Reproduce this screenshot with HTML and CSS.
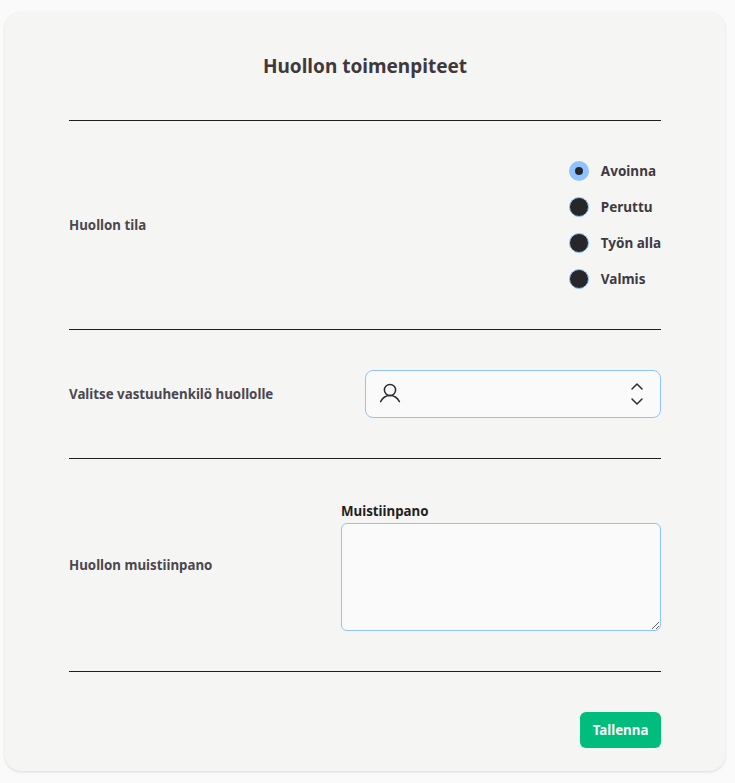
FILE: index.html
```html
<!DOCTYPE html>
<html lang="fi">
<head>
    <meta charset="UTF-8">
    <meta name="viewport" content="width=device-width, initial-scale=1.0">
    <title>Huollon toimenpiteet</title>
    <link rel="stylesheet" href="styles.css">
</head>
<body>
    <form class="card" action="#">
        <h1>Huollon toimenpiteet</h1>

        <div class="row">
            <span class="row-label">Huollon tila</span>
            <div class="radios">
                <label class="radio-item"><span class="radio checked"></span>Avoinna</label>
                <label class="radio-item"><span class="radio"></span>Peruttu</label>
                <label class="radio-item"><span class="radio"></span>Työn alla</label>
                <label class="radio-item"><span class="radio"></span>Valmis</label>
            </div>
        </div>

        <div class="row">
            <span class="row-label">Valitse vastuuhenkilö huollolle</span>
            <div class="select">
                <svg class="user-icon" width="24" height="24" viewBox="0 0 24 24" fill="none" stroke="#2b2b30" stroke-width="1.5" stroke-linecap="round">
                    <circle cx="12" cy="8" r="5.6"/>
                    <path d="M2.600 19.600c2-3.600 5.400-6 9.400-6s7.400 2.400 9.400 6"/>
                </svg>
                <svg class="updown-icon" width="14" height="24" viewBox="0 0 14 24" fill="none" stroke="#2b2b30" stroke-width="1.5" stroke-linecap="round" stroke-linejoin="round">
                    <path d="M2 7l5-5 5 5"/>
                    <path d="M2 17l5 5 5-5"/>
                </svg>
            </div>
        </div>

        <div class="row">
            <span class="row-label">Huollon muistiinpano</span>
            <div class="note">
                <label class="note-label" for="note">Muistiinpano</label>
                <textarea id="note" name="note"></textarea>
            </div>
        </div>

        <div class="actions">
            <button type="submit" class="save">Tallenna</button>
        </div>
    </form>
</body>
</html>
```

FILE: styles.css
```css
*{
    margin: 0;
    padding: 0;
    box-sizing: border-box;
    font-family: "Noto Sans", "Open Sans", sans-serif;
}
body{
    background-color: #fafafa;
    padding: 12px 10px 12px 5px;
}
.card{
    background-color: #f5f5f3;
    border-radius: 16px;
    box-shadow: 0 1px 3px rgba(0, 0, 0, 0.12);
    padding: 40px 64px 23px;
    height: 759px;
}
h1{
    text-align: center;
    font-size: 19px;
    line-height: 28px;
    font-weight: 700;
    color: #3f383c;
    padding-bottom: 40px;
    border-bottom: 1px solid #1f1f1f;
}
.row{
    display: flex;
    justify-content: space-between;
    align-items: center;
    padding: 40px 0;
    border-bottom: 1px solid #1f1f1f;
}
.row-label{
    font-size: 13.3px;
    line-height: 18px;
    font-weight: 700;
    color: #4b4750;
}
.radios{
    display: flex;
    flex-direction: column;
    gap: 16px;
}
.radio-item{
    display: flex;
    align-items: center;
    gap: 12px;
    height: 20px;
    font-size: 13.5px;
    line-height: 18px;
    font-weight: 700;
    color: #3d3a44;
}
.radio{
    width: 20px;
    height: 20px;
    border-radius: 50%;
    background-color: #27272a;
    border: 1px solid #8fc3ff;
}
.radio.checked{
    border: 6px solid #8fc3ff;
}
.select{
    width: 296px;
    height: 48px;
    display: flex;
    justify-content: space-between;
    align-items: center;
    padding: 0 16px 0 12px;
    background-color: #fafafa;
    border: 1px solid #8fc3ff;
    border-radius: 8px;
}
.note{
    width: 320px;
}
.note-label{
    display: block;
    font-size: 13.3px;
    line-height: 24px;
    font-weight: 700;
    color: #1f1f24;
}
textarea{
    display: block;
    width: 100%;
    height: 108px;
    background-color: #fafafa;
    border: 1px solid #8fc3ff;
    border-radius: 6px;
}
.actions{
    display: flex;
    justify-content: flex-end;
    padding-top: 40px;
}
.save{
    width: 81px;
    height: 36px;
    background-color: #00bd7e;
    color: #fafafa;
    border: none;
    border-radius: 6px;
    font-size: 13.3px;
    font-weight: 700;
}
```
